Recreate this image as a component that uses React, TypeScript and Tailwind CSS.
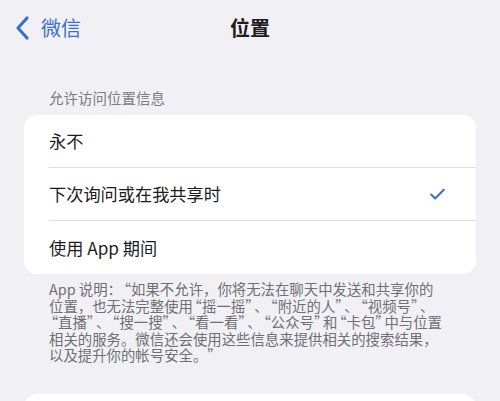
import { Check } from 'lucide-react'

const font = { fontFamily: '"Noto Sans CJK SC", "Noto Sans", sans-serif' }

const options = [
  { label: '永不', checked: false },
  { label: '下次询问或在我共享时', checked: true },
  { label: '使用 App 期间', checked: false },
]

const note = [
  'App 说明：“如果不允许，你将无法在聊天中发送和共享你的',
  '位置，也无法完整使用“摇一摇”、“附近的人”、“视频号”、',
  '“直播”、“搜一搜”、“看一看”、“公众号”和“卡包”中与位置',
  '相关的服务。微信还会使用这些信息来提供相关的搜索结果，',
  '以及提升你的帐号安全。”',
]

// curly quotes get a wider box, as on iOS
function NoteLine({ text }: { text: string }) {
  const parts = text.split(/([“”])/)
  return (
    <div className="whitespace-nowrap">
      {parts.map((p, i) =>
        p === '“' ? (
          <span key={i} className="inline-flex w-[0.63em] justify-end">{p}</span>
        ) : p === '”' ? (
          <span key={i} className="inline-flex w-[0.63em] justify-start">{p}</span>
        ) : (
          p
        )
      )}
    </div>
  )
}

export default function App() {
  return (
    <div className="w-[500px] h-[401px] overflow-hidden bg-[#f1f1f5] text-[#1c1c1e]" style={font}>
      {/* Nav bar */}
      <div className="relative h-[56px] flex items-center justify-center">
        <div className="absolute left-[14px] top-[15px] flex items-center gap-[9px] text-[#3b6fcc]">
          <svg width="18" height="26" viewBox="0 0 18 26" fill="none">
            <path d="M13 3 L4 13 L13 23" stroke="currentColor" strokeWidth="3.2" strokeLinecap="round" strokeLinejoin="round" />
          </svg>
          <span className="text-[20px] leading-[26px]">微信</span>
        </div>
        <span className="text-[20px] font-bold leading-[26px]">位置</span>
      </div>

      {/* Section header */}
      <div className="pl-[49px] pt-[33px] text-[14.5px] leading-[18px] text-[#7b7b80]">允许访问位置信息</div>

      {/* Options card */}
      <div className="mx-[24px] mt-[8px] rounded-[13px] bg-white">
        {options.map((o, i) => (
          <div key={o.label} className="pl-[49px] -ml-[24px]">
            <div className={'h-[53px] flex items-center justify-between pr-[29px] ' + (i < options.length - 1 ? 'border-b border-[#dedee2]' : '')}>
              <span className="text-[17.2px]">{o.label}</span>
              {o.checked && <Check size={19} strokeWidth={2.6} className="text-[#3b6fcc]" />}
            </div>
          </div>
        ))}
      </div>

      {/* Footer note */}
      <div className="pl-[49px] pt-[7px] text-[14.4px] leading-[16.5px] text-[#6f6f74]">
        {note.map((l) => (
          <NoteLine key={l} text={l} />
        ))}
      </div>

      {/* Next card */}
      <div className="mx-[24px] mt-[30px] h-[40px] rounded-[13px] bg-white" />
    </div>
  )
}
